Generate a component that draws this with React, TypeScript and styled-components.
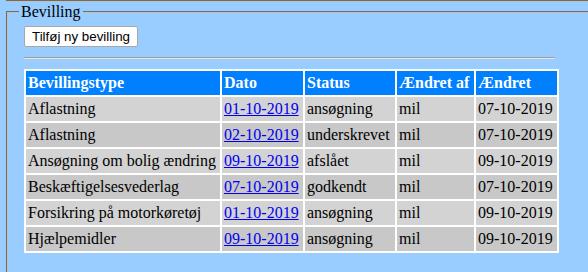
import React from "react";
import styled, { createGlobalStyle } from "styled-components";

const serif = `"Liberation Serif", "Times New Roman", "DejaVu Serif", serif`;

const Global = createGlobalStyle`
  html, body {
    margin: 0;
    padding: 0;
    background: #99ccff;
    font-family: ${serif};
    font-size: 16px;
    color: #000;
  }
`;

const Frame = styled.div`
  margin-left: 6px;
  border-top: 2px groove #c0c0c0;
  width: 700px;
`;

const Fieldset = styled.fieldset`
  margin: 1px 0 0 0;
  padding: 5px 12px 20px 11px;
  border: 2px groove #c0c0c0;
  min-height: 300px;
  font-family: ${serif};
`;

const Legend = styled.legend`
  padding: 0 2px;
  margin: 0;
  font-family: ${serif};
  font-size: 16px;
  line-height: 18px;
`;

const Body = styled.div`
  padding-left: 5px;
`;

const AddButton = styled.button`
  display: block;
  font-family: "Liberation Sans", Arial, sans-serif;
  font-size: 13.33px;
  height: 21px;
  padding: 1px 7px;
  background: #fefefe;
  border: 1px solid #a8a8a8;
  border-radius: 2px;
  color: #000;
`;

const Rule = styled.hr`
  width: 531px;
  margin: 10px 0 10px 0;
  border: none;
  border-top: 1px solid #9c9c9c;
  border-bottom: 1px solid #e6e6e6;
  height: 0;
`;

const Table = styled.table`
  border-collapse: separate;
  border-spacing: 2px;
  background: #ffffff;
  font-family: ${serif};
  font-size: 16px;
`;

const Th = styled.th`
  background: #0080ff;
  color: #ffffff;
  text-align: left;
  font-weight: bold;
  padding: 3px 2px;
  line-height: 18px;
  white-space: nowrap;
`;

const Td = styled.td<{ $alt: boolean }>`
  background: ${(p) => (p.$alt ? "#c8c8c8" : "#d3d3d3")};
  padding: 3px 2px;
  line-height: 18px;
  white-space: nowrap;
`;

const DateLink = styled.a`
  color: #0000ee;
  text-decoration: underline;
`;

type Row = {
  type: string;
  date: string;
  status: string;
  by: string;
  changed: string;
};

const rows: Row[] = [
  { type: "Aflastning", date: "01-10-2019", status: "ansøgning", by: "mil", changed: "07-10-2019" },
  { type: "Aflastning", date: "02-10-2019", status: "underskrevet", by: "mil", changed: "07-10-2019" },
  { type: "Ansøgning om bolig ændring", date: "09-10-2019", status: "afslået", by: "mil", changed: "09-10-2019" },
  { type: "Beskæftigelsesvederlag", date: "07-10-2019", status: "godkendt", by: "mil", changed: "07-10-2019" },
  { type: "Forsikring på motorkøretøj", date: "01-10-2019", status: "ansøgning", by: "mil", changed: "09-10-2019" },
  { type: "Hjælpemidler", date: "09-10-2019", status: "ansøgning", by: "mil", changed: "09-10-2019" },
];

export default function App() {
  return (
    <>
      <Global />
      <Frame>
        <Fieldset>
          <Legend>Bevilling</Legend>
          <Body>
            <AddButton type="button">Tilføj ny bevilling</AddButton>
            <Rule />
            <Table>
              <thead>
                <tr>
                  <Th style={{ width: 190 }}>Bevillingstype</Th>
                  <Th style={{ width: 77 }}>Dato</Th>
                  <Th style={{ width: 86 }}>Status</Th>
                  <Th style={{ width: 73 }}>Ændret af</Th>
                  <Th style={{ width: 77 }}>Ændret</Th>
                </tr>
              </thead>
              <tbody>
                {rows.map((r, i) => (
                  <tr key={i}>
                    <Td $alt={i % 2 === 1}>{r.type}</Td>
                    <Td $alt={i % 2 === 1}>
                      <DateLink href="#">{r.date}</DateLink>
                    </Td>
                    <Td $alt={i % 2 === 1}>{r.status}</Td>
                    <Td $alt={i % 2 === 1}>{r.by}</Td>
                    <Td $alt={i % 2 === 1}>{r.changed}</Td>
                  </tr>
                ))}
              </tbody>
            </Table>
          </Body>
        </Fieldset>
      </Frame>
    </>
  );
}
